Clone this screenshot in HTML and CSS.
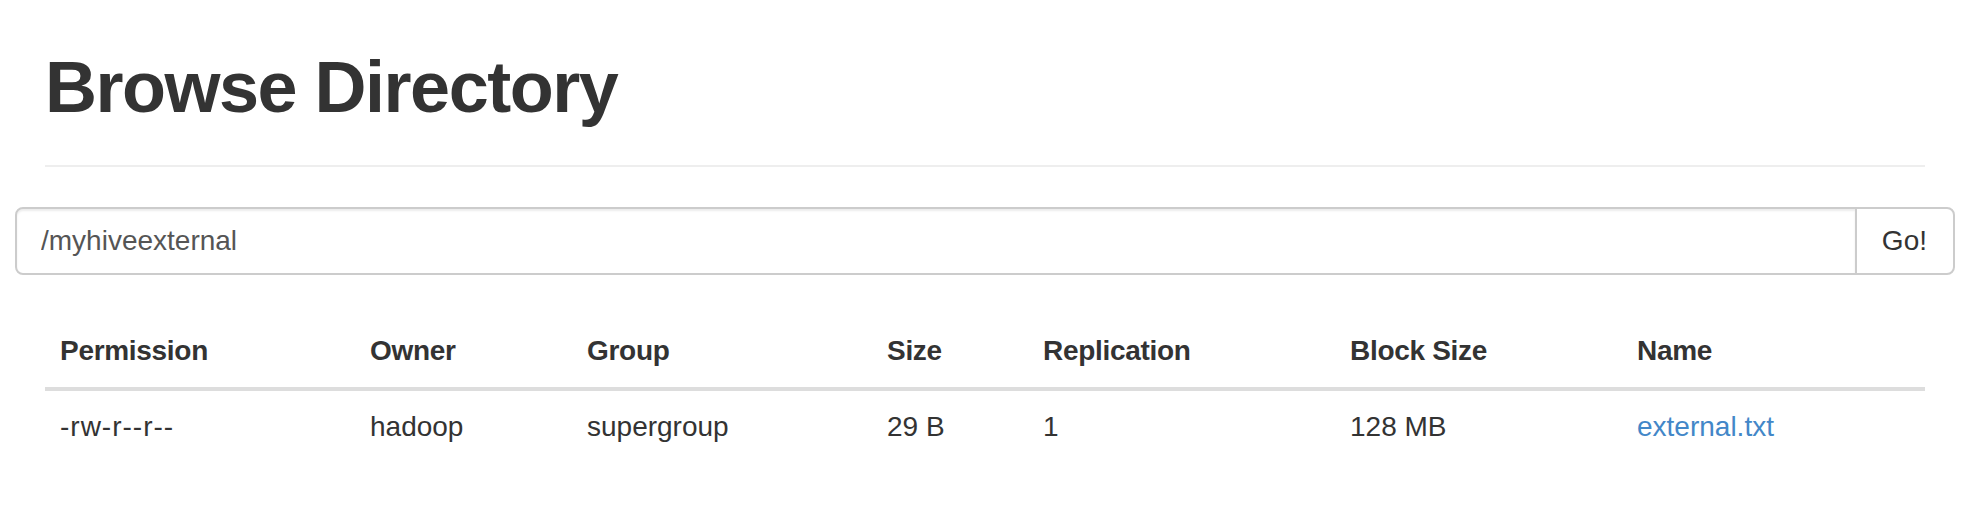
FILE: index.html
```html
<!DOCTYPE html>
<html lang="en">
<head>
  <meta charset="UTF-8">
  <title>Browsing HDFS</title>
  <link rel="stylesheet" href="styles.css">
</head>
<body>

  <div class="container">
    <div class="page-header">
      <h1>Browse Directory</h1>
    </div>

    <div class="row">
      <form class="input-group" onsubmit="return false;">
        <input type="text" class="form-control" id="directory" value="/myhiveexternal">
        <button class="btn" type="button" id="btn-nav-directory">Go!</button>
      </form>
    </div>

    <table class="table" id="table-explorer">
      <colgroup>
        <col class="col-perm">
        <col class="col-owner">
        <col class="col-group">
        <col class="col-size">
        <col class="col-repl">
        <col class="col-block">
        <col class="col-name">
      </colgroup>
      <thead>
        <tr>
          <th>Permission</th>
          <th>Owner</th>
          <th>Group</th>
          <th>Size</th>
          <th>Replication</th>
          <th>Block Size</th>
          <th>Name</th>
        </tr>
      </thead>
      <tbody>
        <tr>
          <td class="perm">-rw-r--r--</td>
          <td>hadoop</td>
          <td>supergroup</td>
          <td>29 B</td>
          <td>1</td>
          <td>128 MB</td>
          <td><a href="#">external.txt</a></td>
        </tr>
      </tbody>
    </table>
  </div>

</body>
</html>
```

FILE: styles.css
```css
body {
  font-family: "Liberation Sans", Arial, sans-serif;
  font-size: 28px;
  line-height: 40px;
  color: #333;
  background-color: #fff;
  margin: 0;
}

.container {
  width: 1940px;
  margin: 0 auto;
  padding: 0 30px;
  box-sizing: border-box;
}

.page-header {
  margin: 48px 0 40px;
  padding-bottom: 18px;
  border-bottom: 2px solid #eee;
}

h1 {
  margin: 0 0 20px;
  font-size: 72px;
  line-height: 79px;
  font-weight: bold;
  letter-spacing: -1.5px;
  color: #333;
}

.row {
  margin: 0 -30px;
}

.input-group {
  display: flex;
  margin: 0;
}

.form-control {
  flex: 1;
  height: 68px;
  box-sizing: border-box;
  padding: 12px 24px;
  font-family: inherit;
  font-size: 28px;
  color: #555;
  border: 2px solid #ccc;
  border-radius: 8px 0 0 8px;
  box-shadow: inset 0 2px 2px rgba(0,0,0,0.075);
  outline: none;
}

.btn {
  height: 68px;
  box-sizing: border-box;
  margin-left: -2px;
  padding: 12px 26px 12px 25px;
  font-family: inherit;
  font-size: 28px;
  color: #333;
  background-color: #fff;
  border: 2px solid #ccc;
  border-radius: 0 8px 8px 0;
  cursor: pointer;
}

.table {
  width: 100%;
  margin-top: 40px;
  border-collapse: collapse;
  table-layout: fixed;
}

.col-perm { width: 310px; }
.col-owner { width: 217px; }
.col-group { width: 300px; }
.col-size { width: 156px; }
.col-repl { width: 307px; }
.col-block { width: 287px; }
.col-name { width: 303px; }

.table th {
  padding: 16px 16px 16px 15px;
  text-align: left;
  font-weight: bold;
  letter-spacing: -0.3px;
  border-bottom: 4px solid #ddd;
}

.table td {
  padding: 16px 16px 16px 15px;
  text-align: left;
}

.table td.perm {
  letter-spacing: 1px;
}

.table a {
  color: #4387c8;
  text-decoration: none;
}
```
